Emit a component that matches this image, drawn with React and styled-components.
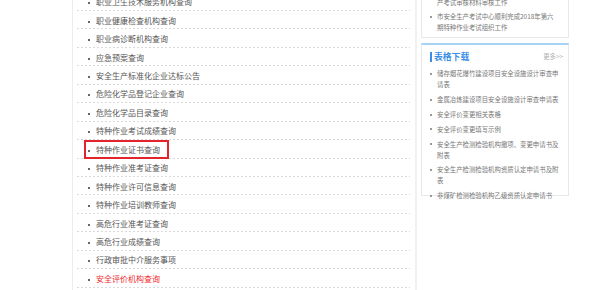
import React from 'react';
import styled, { createGlobalStyle, css } from 'styled-components';

const Global = createGlobalStyle`
  html, body { margin: 0; padding: 0; background: #fff; }
  body {
    width: 600px;
    height: 290px;
    overflow: hidden;
    font-family: "Noto Sans CJK SC", "Microsoft YaHei", sans-serif;
  }
  * { box-sizing: border-box; }
`;

const Page = styled.div`
  display: flex;
  align-items: flex-start;
  height: 290px;
  padding-left: 72px;
`;

const MainCol = styled.div`
  width: 345px;
  height: 290px;
  border-left: 1px solid #ececec;
  border-right: 2px solid #f1f1f1;
  padding: 0 5px 0 4px;
  overflow: hidden;
`;

const QueryList = styled.ul`
  list-style: none;
  margin: -7.45px 0 0;
  padding: 0;
`;

const Row = styled.li`
  height: 18.45px;
  display: flex;
  align-items: center;
  padding-left: 9px;
  background: linear-gradient(to right, #dadada 50%, transparent 50%) left bottom / 4px 1px repeat-x;
`;

const Link = styled.a`
  display: inline-flex;
  align-items: center;
  gap: 6px;
  height: 15px;
  padding: 0 7px 0 2px;
  font-size: 8px;
  line-height: 15px;
  color: ${p => (p.$hot ? '#f0282d' : '#555')};
  text-decoration: none;
  white-space: nowrap;
  ${p => p.$marked && css`outline: 2px solid #e3242b;`}
`;

const Dot = styled.i`
  width: 2px;
  height: 2px;
  margin-top: 3px;
  background: #666;
  flex: none;
`;

const SideCol = styled.div`
  width: 148px;
  margin-left: 4px;
  display: flex;
  flex-direction: column;
`;

const Box = styled.div`
  border: 1px solid #e8e8e8;
  ${p => p.$clipped && css`
    border-top: none;
    margin-top: -14.5px;
    padding-bottom: 4px;
  `}
  ${p => p.$accent && css`
    margin-top: 5px;
    height: 153px;
    border-top: 2px solid #a6d2f4;
    padding-top: 5.7px;
  `}
`;

const BoxHead = styled.div`
  display: flex;
  justify-content: space-between;
  align-items: center;
  height: 12px;
  padding: 0 5px 0 8px;
  margin-bottom: 5.5px;
`;

const Title = styled.h3`
  margin: 0;
  height: 10px;
  line-height: 10px;
  border-left: 2px solid #3b8ee6;
  padding-left: 2px;
  font-size: 8.8px;
  font-weight: bold;
  color: #3b8ee6;
`;

const More = styled.span`
  font-size: 6.4px;
  color: #b0b0b0;
`;

const Items = styled.ul`
  list-style: none;
  margin: 0;
  padding: 0 9px 0 8px;
  display: flex;
  flex-direction: column;
  gap: 3.8px;
`;

const Item = styled.li`
  display: flex;
  gap: 5px;
  font-size: 6.4px;
  line-height: 11px;
  color: #777;
`;

const Square = styled.i`
  width: 2px;
  height: 2px;
  margin-top: 4.5px;
  background: #999;
  flex: none;
`;

const ItemText = styled.span`
  width: 122px;
  word-break: break-all;
`;

const queries = [
  '职业卫生技术服务机构查询',
  '职业健康检查机构查询',
  '职业病诊断机构查询',
  '应急预案查询',
  '安全生产标准化企业达标公告',
  '危险化学品登记企业查询',
  '危险化学品目录查询',
  '特种作业考试成绩查询',
  '特种作业证书查询',
  '特种作业准考证查询',
  '特种作业许可信息查询',
  '特种作业培训教师查询',
  '高危行业准考证查询',
  '高危行业成绩查询',
  '行政审批中介服务事项',
  '安全评价机构查询',
];

const forms = [
  '储存烟花爆竹建设项目安全设施设计审查申请表',
  '金属冶炼建设项目安全设施设计审查申请表',
  '安全评价变更相关表格',
  '安全评价变更填写示例',
  '安全生产检测检验机构撤项、变更申请书及附表',
  '安全生产检测检验机构资质认定申请书及附表',
  '非煤矿检测检验机构乙级资质认定申请书',
];

export default function App() {
  return (
    <>
      <Global />
      <Page>
        <MainCol>
          <QueryList>
            {queries.map((q, i) => (
              <Row key={q}>
                <Link
                  href="#"
                  $marked={q === '特种作业证书查询'}
                  $hot={i === queries.length - 1}
                >
                  <Dot />
                  {q}
                </Link>
              </Row>
            ))}
          </QueryList>
        </MainCol>
        <SideCol>
          <Box $clipped>
            <Items>
              <Item>
                <Square />
                <ItemText>
                  市安全生产考试中心开展特种作业安全生<br />产考试审核材料审核工作
                </ItemText>
              </Item>
              <Item>
                <Square />
                <ItemText>
                  市安全生产考试中心顺利完成2018年第六<br />期特种作业考试组织工作
                </ItemText>
              </Item>
            </Items>
          </Box>
          <Box $accent>
            <BoxHead>
              <Title>表格下载</Title>
              <More>更多&gt;&gt;</More>
            </BoxHead>
            <Items>
              {forms.map(f => (
                <Item key={f}>
                  <Square />
                  <ItemText>{f}</ItemText>
                </Item>
              ))}
            </Items>
          </Box>
        </SideCol>
      </Page>
    </>
  );
}
